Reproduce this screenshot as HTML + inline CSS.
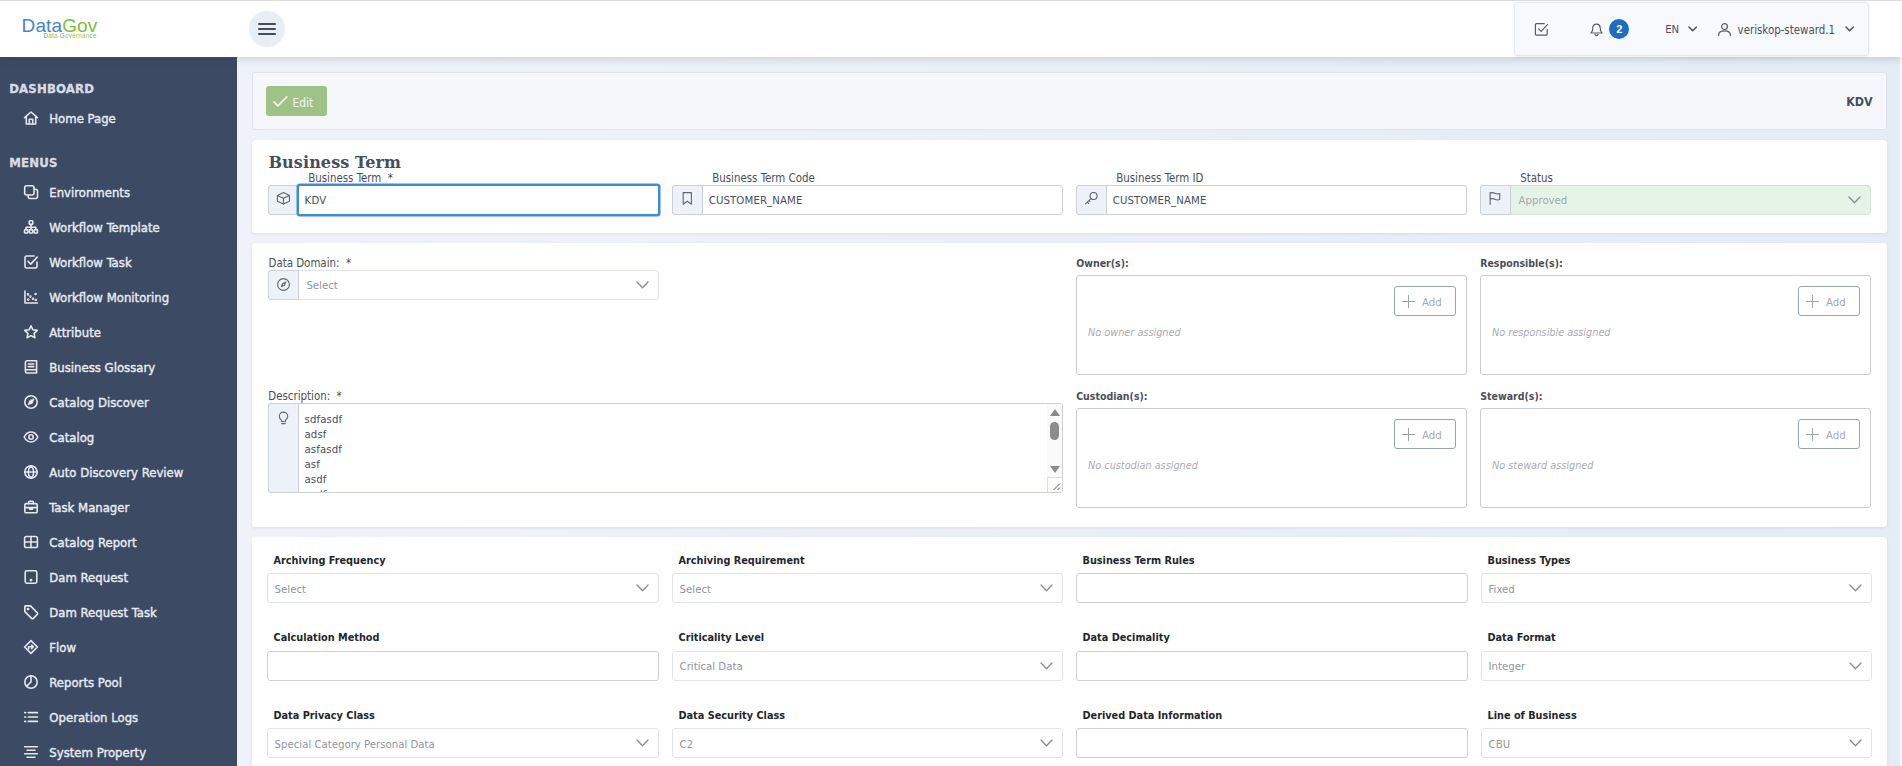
<!DOCTYPE html>
<html lang="en">
<head>
<meta charset="utf-8">
<title>DataGov - Business Term</title>
<style>
*{box-sizing:border-box;margin:0;padding:0}
html,body{width:1902px;height:766px;overflow:hidden}
body{position:relative;background:linear-gradient(90deg,#eff2f9 237px,#e5ecf6 1902px);font-family:"DejaVu Sans Condensed","Liberation Sans",sans-serif;font-size:11.3px;color:#4a5058}
.abs{position:absolute}
/* ---------- top bar ---------- */
#top{position:absolute;left:0;top:0;width:1902px;height:57px;background:#fff;border-top:1px solid #dcdcdc;box-shadow:0 1px 9px rgba(50,58,70,.22);z-index:5}
#logo1{position:absolute;left:21.600px;top:13.900px;letter-spacing:.12px;font:400 19px/22px "Liberation Sans",sans-serif;white-space:nowrap}
#logo1 .b{color:#4b83c6}#logo1 .g{color:#80bb3e}
#logo2{position:absolute;left:43.500px;top:31.200px;font:400 6.3px/8px "Liberation Sans",sans-serif;white-space:nowrap;letter-spacing:.25px;color:#8fc35a}
#logo2 .b{color:#6f8fc0}
#burger{position:absolute;left:249px;top:10px;width:36px;height:36px;border-radius:50%;background:#e8eef6}
#burger i{position:absolute;left:9px;width:18px;height:2px;background:#464d55;border-radius:1px}
#hbox{position:absolute;left:1514px;top:1px;width:355px;height:54px;background:#f8f9fc;border:1px solid #e4e8ee;border-radius:4px;box-shadow:0 1px 3px rgba(60,75,100,.10)}
#hbox .t{position:absolute;top:18.600px;font-size:11.3px;line-height:16px;color:#4a5058;white-space:nowrap}
#badge{position:absolute;left:94.400px;top:16px;width:20px;height:20px;border-radius:50%;background:#1b6ec2;color:#fff;font:700 11px/20px "Liberation Sans",sans-serif;text-align:center}
/* ---------- sidebar ---------- */
#side{position:absolute;left:0;top:57px;width:237px;height:709px;background:#3c4a64;z-index:4}
#side .h{position:absolute;left:9.2px;font:700 13px/16px "DejaVu Sans Condensed","Liberation Sans",sans-serif;color:#d6dce6;letter-spacing:.2px;white-space:nowrap;-webkit-text-stroke:.35px #d6dce6}
#side .it{position:absolute;left:49.3px;font:400 13px/16px "DejaVu Sans Condensed","Liberation Sans",sans-serif;color:#e6eaf1;white-space:nowrap;-webkit-text-stroke:.4px #e6eaf1}
#side svg{position:absolute;left:23px;width:16px;height:16px;fill:none;stroke:#e3e8f0;stroke-width:1.6;stroke-linecap:round;stroke-linejoin:round}
/* ---------- main ---------- */
.card{position:absolute;left:252px;width:1635px;background:#fff;border-radius:3.500px;box-shadow:0 1px 3px rgba(60,75,100,.10)}
#tb{left:252px;top:72px;width:1635px;height:57.5px;background:#f5f7fb;border:1px solid #dfe4eb;border-radius:3px;box-shadow:none}
#edit{position:absolute;left:13px;top:13px;width:61px;height:30px;border-radius:3px;background:#9fc387;color:#f2f8ee;font-size:11.3px;line-height:30px}
#edit span{position:absolute;left:26.500px;top:2px;font-size:11.8px}
#kdv{position:absolute;right:13.300px;top:21.400px;font:700 12.4px/16px "DejaVu Sans Condensed","Liberation Sans",sans-serif;color:#464f5c}
h2{position:absolute;left:16.5px;top:13px;font:700 16px/20px "DejaVu Serif","Liberation Serif",serif;color:#434e5e;letter-spacing:.1px;white-space:nowrap}
.lbl{position:absolute;font-size:11.4px;line-height:14px;color:#4a5058;white-space:nowrap}
.bl{position:absolute;font:700 10.8px/14px "DejaVu Sans Condensed","Liberation Sans",sans-serif;color:#23272c;white-space:nowrap}
.bl2{position:absolute;font:700 10.5px/14px "DejaVu Sans Condensed","Liberation Sans",sans-serif;color:#4a4f56;white-space:nowrap}
.box{position:absolute;height:30px;border:1px solid #cdd0d4;border-radius:3px;background:#fff}
.box.sel{border-color:#e0e4e9}
.box .ad{position:absolute;left:-1px;top:-1px;width:31px;height:30px;border:1px solid #cdd0d4;border-radius:3px 0 0 3px;background:#edf2f9}
.box.sel .ad{border-color:#cdd0d4}
.box .v{position:absolute;top:7.500px;font-size:11.3px;line-height:14px;color:#4a5058;white-space:nowrap;letter-spacing:.12px}
.box .ph{position:absolute;top:7.500px;font-size:11.3px;line-height:14px;color:#8f969c;white-space:nowrap}
.chev{position:absolute;right:9.5px;top:10px;width:13px;height:8px;fill:none;stroke:#868e96;stroke-width:1.3;stroke-linecap:round;stroke-linejoin:round}
.ic{position:absolute;fill:none;stroke:#5f666e;stroke-width:1.1;stroke-linecap:round;stroke-linejoin:round}
.box .focus{position:absolute;left:29px;top:-1px;right:-1px;bottom:-1px;border:1px solid #3d8bd9;border-radius:2px;box-shadow:0 0 0 1.500px #3d8bd9;background:#fff}
.box.st{background:#e4f3e6;border-color:#d3ddd6 #dbe6dd #dbe6dd}
.box.ta .clip{position:absolute;left:0;top:0;right:0;bottom:0;overflow:hidden}
.sbar{position:absolute;right:0;top:0;width:15px;bottom:0;background:#fafafa}
.sbar .up{position:absolute;left:2.500px;top:5px;border:5px solid transparent;border-top:0;border-bottom:7px solid #8c8c8c}
.sbar .dn{position:absolute;left:2.500px;top:62px;border:5px solid transparent;border-bottom:0;border-top:7px solid #8c8c8c}
.sbar .th{position:absolute;left:3px;top:17.500px;width:9px;height:18px;border-radius:4.500px;background:#8c8c8c}
.sbar .rz{position:absolute;left:0;bottom:0;width:15px;height:15px;background:#fff;border-left:1px solid #dcdcdc;border-top:1px solid #dcdcdc}
.sbar .rz svg{position:absolute;left:-1px;top:-1px;width:15px;height:15px;fill:none;stroke:#555;stroke-width:1}
.pbox{position:absolute;width:391px;height:100px;border:1px solid #c9cdd2;border-radius:3px;background:#fff}
.pbox .add{position:absolute;right:10px;top:10px;width:62px;height:30px;border:1px solid #9aa4ae;border-radius:3px;color:#a2aab2;font-size:11.3px;line-height:28px}
.pbox .add span{position:absolute;left:27px;top:1.700px}
.pbox .add svg{position:absolute;left:7px;top:8px;width:13px;height:13px;fill:none;stroke:#9aa3ab;stroke-width:1;stroke-linecap:round}
.pbox em{position:absolute;left:11px;top:50.300px;font:italic 400 10.8px/14px "DejaVu Sans Condensed","Liberation Sans",sans-serif;color:#a9adb1;white-space:nowrap}
</style>
</head>
<body>
<!-- TOP -->
<div id="top">
  <div id="logo1"><span class="b">Data</span><span class="g">Gov</span></div>
  <div id="logo2"><span class="b">D</span>ata <span class="b">G</span>overnance</div>
  <div id="burger"><i style="top:12px"></i><i style="top:17.2px"></i><i style="top:22.4px"></i></div>
  <div id="hbox">
    <svg class="ic" style="left:18.600px;top:19px;width:15px;height:15px;stroke:#555d66;stroke-width:1.2" viewBox="0 0 15 15"><path d="M13.2 7.4v4.6a1.2 1.2 0 0 1-1.2 1.2H2.6a1.2 1.2 0 0 1-1.2-1.2V2.8a1.2 1.2 0 0 1 1.2-1.2h7.6"/><path d="M4.6 6.8l2.5 2.5 6.4-6.6"/></svg>
    <svg class="ic" style="left:74px;top:18.800px;width:15px;height:15px;stroke:#555d66;stroke-width:1.2" viewBox="0 0 15 15"><path d="M2 11h11c-1.2-1-1.7-2.300-1.700-4.600 0-2.400-1.600-4.200-3.800-4.200S3.700 4 3.700 6.400C3.700 8.700 3.200 10 2 11z"/><path d="M6 12.600c.3.700.8 1 1.500 1s1.200-.3 1.500-1"/></svg>
    <div id="badge">2</div>
    <div class="t" style="left:150.200px">EN</div>
    <svg class="chev" style="left:172.600px;top:23.400px;right:auto;width:10px;height:7px;stroke:#4a5058;stroke-width:1.5" viewBox="0 0 10 7"><path d="M1 1l3.700 3.700L8.400 1"/></svg>
    <svg class="ic" style="left:202.400px;top:18.800px;width:15px;height:15px;stroke:#555d66;stroke-width:1.2" viewBox="0 0 15 15"><circle cx="7.5" cy="4.600" r="2.900"/><path d="M1.500 13.600c0-3 2.600-4.800 6-4.800s6 1.800 6 4.800"/></svg>
    <div class="t" style="left:222.600px;font-size:11.4px">veriskop-steward.1</div>
    <svg class="chev" style="left:329.600px;top:23.400px;right:auto;width:10px;height:7px;stroke:#4a5058;stroke-width:1.5" viewBox="0 0 10 7"><path d="M1 1l3.700 3.700L8.400 1"/></svg>
  </div>
</div>

<div style="position:absolute;left:1900px;top:57px;width:2px;height:709px;background:linear-gradient(90deg,rgba(255,255,255,.55) 50%,#fff 50%);z-index:3"></div>
<!-- SIDEBAR -->
<div id="side">
  <div class="h" style="top:24px">DASHBOARD</div>
  <div class="h" style="top:98px">MENUS</div>
  <!--SIDEITEMS-->
  <svg viewBox="0 0 16 16" style="top:53.0px"><path d="M1.6 7.6L8 2l6.400 5.600"/><path d="M3.300 6.400V14h9.400V6.400"/><path d="M6.300 14V9.300h3.400V14"/></svg><div class="it" style="top:53.5px">Home Page</div>
  <svg viewBox="0 0 16 16" style="top:127.0px"><rect x="1.700" y="1.700" width="9.300" height="9.300" rx="2"/><path d="M5.200 11.200v1.300a2 2 0 0 0 2 2h5.300a2 2 0 0 0 2-2V7.200a2 2 0 0 0-2-2h-1.300"/></svg><div class="it" style="top:127.5px">Environments</div>
  <svg viewBox="0 0 16 16" style="top:162.0px"><rect x="6.200" y="1.800" width="3.600" height="3.600" rx=".8"/><rect x="1.500" y="10.600" width="3.400" height="3.400" rx=".8"/><rect x="6.300" y="10.600" width="3.400" height="3.400" rx=".8"/><rect x="11.100" y="10.600" width="3.400" height="3.400" rx=".8"/><path d="M8 5.400v5.200M3.200 10.600V8.200h9.600v2.400"/></svg><div class="it" style="top:162.5px">Workflow Template</div>
  <svg viewBox="0 0 16 16" style="top:197.0px"><path d="M14 8v4.400a1.600 1.600 0 0 1-1.600 1.600H3.600A1.600 1.600 0 0 1 2 12.400V3.600A1.600 1.600 0 0 1 3.600 2h7.600"/><path d="M5 7.400l2.700 2.700 6.500-7"/></svg><div class="it" style="top:197.5px">Workflow Task</div>
  <svg viewBox="0 0 16 16" style="top:232.0px"><path d="M2 2v12h12.400"/><circle cx="5.200" cy="10.600" r=".5"/><circle cx="7.400" cy="7.600" r=".5"/><circle cx="10" cy="9.800" r=".5"/><circle cx="12.600" cy="5" r=".5"/><circle cx="5" cy="5.400" r=".5"/><circle cx="12.800" cy="11" r=".5"/></svg><div class="it" style="top:232.5px">Workflow Monitoring</div>
  <svg viewBox="0 0 16 16" style="top:267.0px"><path d="M8 1.800l1.900 4 4.400.6-3.200 3 .8 4.300L8 11.600l-3.900 2.100.8-4.300-3.200-3 4.400-.6z"/></svg><div class="it" style="top:267.5px">Attribute</div>
  <svg viewBox="0 0 16 16" style="top:302.0px"><path d="M2.400 12.400V3.400A1.600 1.600 0 0 1 4 1.800h9.600v9H4a1.600 1.600 0 0 0-1.600 1.600A1.600 1.600 0 0 0 4 14h9.600v-3.200"/><path d="M5.400 5h5.400M5.400 7.600h5.400"/></svg><div class="it" style="top:302.5px">Business Glossary</div>
  <svg viewBox="0 0 16 16" style="top:337.0px"><circle cx="8" cy="8" r="6.200"/><path d="M10.800 5.200L9.300 9.300 5.200 10.800l1.500-4.100z" fill="#eef0f4" stroke-width=".8"/></svg><div class="it" style="top:337.5px">Catalog Discover</div>
  <svg viewBox="0 0 16 16" style="top:372.0px"><path d="M1.200 8S3.700 3 8 3s6.800 5 6.800 5S12.300 13 8 13 1.200 8 1.200 8z"/><circle cx="8" cy="8" r="2.200"/></svg><div class="it" style="top:372.5px">Catalog</div>
  <svg viewBox="0 0 16 16" style="top:407.0px"><circle cx="8" cy="8" r="6.200"/><path d="M1.800 8h12.400M8 1.800c-2 1.800-2.800 3.900-2.800 6.200s.8 4.400 2.800 6.200c2-1.800 2.800-3.900 2.800-6.200S10 3.600 8 1.800z"/></svg><div class="it" style="top:407.5px">Auto Discovery Review</div>
  <svg viewBox="0 0 16 16" style="top:442.0px"><rect x="1.800" y="4.600" width="12.400" height="9.200" rx="1.400"/><path d="M5.600 4.600V3.200a1 1 0 0 1 1-1h2.800a1 1 0 0 1 1 1v1.400M1.800 8.600h12.400M6.600 8.600v1.600h2.800V8.600"/></svg><div class="it" style="top:442.5px">Task Manager</div>
  <svg viewBox="0 0 16 16" style="top:477.0px"><rect x="1.600" y="2.500" width="12.800" height="11" rx="1.800"/><path d="M8 2.500v11M1.600 8h12.800"/></svg><div class="it" style="top:477.5px">Catalog Report</div>
  <svg viewBox="0 0 16 16" style="top:512.0px"><rect x="2.200" y="1.800" width="11.600" height="12.400" rx="1.600"/><circle cx="8" cy="11.200" r=".6"/></svg><div class="it" style="top:512.5px">Dam Request</div>
  <svg viewBox="0 0 16 16" style="top:547.0px"><path d="M1.800 2.600v5l6.800 6.800a1.200 1.200 0 0 0 1.700 0l4-4a1.200 1.200 0 0 0 0-1.700L7.500 1.900H2.500a.7.700 0 0 0-.7.700z"/><circle cx="5" cy="5.100" r=".6"/></svg><div class="it" style="top:547.5px">Dam Request Task</div>
  <svg viewBox="0 0 16 16" style="top:582.0px"><path d="M8 1.600L14.400 8 8 14.400 1.600 8z"/><path d="M5.600 10V7.800h4.600M8.600 6l1.800 1.800-1.800 1.800"/></svg><div class="it" style="top:582.5px">Flow</div>
  <svg viewBox="0 0 16 16" style="top:617.0px"><circle cx="8" cy="8" r="6.200"/><path d="M8 1.800V8l-4.400 4.300"/></svg><div class="it" style="top:617.5px">Reports Pool</div>
  <svg viewBox="0 0 16 16" style="top:652.0px"><path d="M5.400 3.600h9M5.400 8h9M5.400 12.400h9" stroke-width="1.700"/><path d="M1.800 3.600h.8M1.800 8h.8M1.800 12.400h.8" stroke-width="1.700"/></svg><div class="it" style="top:652.5px">Operation Logs</div>
  <svg viewBox="0 0 16 16" style="top:687.0px"><path d="M1.600 2.800h12.800M4 6.300h8M1.600 9.800h12.800M4 13.300h8" stroke-width="1.500"/></svg><div class="it" style="top:687.5px">System Property</div>
  <!--/SIDEITEMS-->
</div>

<!-- MAIN -->
<div class="card" id="tb">
  <div id="edit"><svg style="position:absolute;left:7px;top:9.500px;width:15px;height:11px;fill:none;stroke:#f2f8ee;stroke-width:1.7;stroke-linecap:round;stroke-linejoin:round" viewBox="0 0 15 11"><path d="M1 5.800l3.800 4L13.800 1"/></svg><span>Edit</span></div>
  <div id="kdv">KDV</div>
</div>

<div class="card" id="c2" style="top:140px;height:93px">
  <h2>Business Term</h2>
  <!--C2-->
  <div class="lbl" style="left:56.2px;top:30.7px">Business Term&nbsp; *</div>
  <div class="box" style="left:16.0px;top:45px;width:391px"><div class="ad"><svg class="ic" style="left:7px;top:6px;width:16px;height:15px" viewBox="0 0 16 15"><path d="M7.450 .5l6 2.900v5.800l-6 2.850-6-2.850V3.400z"/><path d="M1.450 3.400l6 2.900 6-2.900M7.450 6.300v5.750"/></svg></div><div class="focus"></div><div class="v" style="left:35.6px">KDV</div></div>
  <div class="lbl" style="left:460.2px;top:30.7px">Business Term Code</div>
  <div class="box" style="left:420.0px;top:45px;width:391px"><div class="ad"><svg class="ic" style="left:8px;top:6px;width:15px;height:15px" viewBox="0 0 15 15"><path d="M2.200 .6h8.200v11.600l-4.100-3-4.100 3z"/></svg></div><div class="v" style="left:35.7px">CUSTOMER_NAME</div></div>
  <div class="lbl" style="left:864.2px;top:30.7px">Business Term ID</div>
  <div class="box" style="left:824.0px;top:45px;width:391px"><div class="ad"><svg class="ic" style="left:7px;top:6px;width:16px;height:15px" viewBox="0 0 16 15"><circle cx="9.600" cy="4" r="3.500"/><path d="M7 6.600L1.500 11.900M3.400 10l1.200 1.300M5 8.500l.9 1"/></svg></div><div class="v" style="left:35.7px">CUSTOMER_NAME</div></div>
  <div class="lbl" style="left:1268.2px;top:30.7px">Status</div>
  <div class="box sel st" style="left:1228.0px;top:45px;width:391px"><div class="ad"><svg class="ic" style="left:7px;top:6px;width:16px;height:15px" viewBox="0 0 16 15"><path d="M2.100 12.400V.6M2.100 1.100c1.600-.8 3.200-.6 4.800.2s3 .9 4.800.2v6c-1.800.7-3.200.6-4.800-.2s-3.200-1-4.800-.2"/></svg></div><div class="ph" style="left:37.6px;color:#a3aaae">Approved</div><svg class="chev" viewBox="0 0 13 8"><path d="M1 1l5.500 5.700L12 1"/></svg></div>
  <!--/C2-->
</div>

<div class="card" id="c3" style="top:243px;height:284px">
  <!--C3-->
  <div class="lbl" style="left:16.5px;top:13.4px">Data Domain:&nbsp; *</div>
  <div class="box sel" style="left:16.0px;top:27px;width:391px"><div class="ad"><svg class="ic" style="left:7px;top:5.800px;width:15px;height:15px" viewBox="0 0 15 15"><circle cx="7.500" cy="7.500" r="5.900"/><path d="M10 5L8.600 8.600 5 10l1.400-3.600z" fill="#5a6470" stroke-width=".6"/><circle cx="7.500" cy="7.500" r=".7" fill="#edf2f9" stroke="none"/></svg></div><div class="ph" style="left:37.4px;top:8.300px">Select</div><svg class="chev" viewBox="0 0 13 8"><path d="M1 1l5.500 5.700L12 1"/></svg></div>
  <div class="lbl" style="left:16.3px;top:146.0px">Description:&nbsp; *</div>
  <div class="box ta" style="left:16.0px;top:160px;width:795px;height:90px"><div class="ad" style="height:90px"><svg class="ic" style="left:6.700px;top:5.500px;width:15px;height:15px" viewBox="0 0 15 15"><path d="M5.600 10.200C4.200 9.300 3.300 7.900 3.300 6.300a4.200 4.200 0 0 1 8.400 0c0 1.600-.9 3-2.300 3.900v1.300H5.600z"/><path d="M5.700 13.600h3.600"/></svg></div><div class="clip"><div class="v" style="left:35.500px;top:8.8px">sdfasdf</div><div class="v" style="left:35.500px;top:23.8px">adsf</div><div class="v" style="left:35.500px;top:38.8px">asfasdf</div><div class="v" style="left:35.500px;top:53.8px">asf</div><div class="v" style="left:35.500px;top:68.8px">asdf</div><div class="v" style="left:35.500px;top:83.8px">asdf</div></div><div class="sbar"><i class="up"></i><i class="th"></i><i class="dn"></i><div class="rz"><svg viewBox="0 0 15 15"><path d="M13 6.500L6.500 13M13 10.500L10.500 13"/></svg></div></div></div>
  <div class="bl2" style="left:824.2px;top:12.9px">Owner(s):</div><div class="pbox" style="left:824.0px;top:32.0px"><div class="add"><svg viewBox="0 0 13 13"><path d="M6.500 .5v12M.5 6.500h12"/></svg><span>Add</span></div><em>No owner assigned</em></div>
  <div class="bl2" style="left:1228.2px;top:12.9px">Responsible(s):</div><div class="pbox" style="left:1228.0px;top:32.0px"><div class="add"><svg viewBox="0 0 13 13"><path d="M6.500 .5v12M.5 6.500h12"/></svg><span>Add</span></div><em>No responsible assigned</em></div>
  <div class="bl2" style="left:824.2px;top:145.9px">Custodian(s):</div><div class="pbox" style="left:824.0px;top:165.0px"><div class="add"><svg viewBox="0 0 13 13"><path d="M6.500 .5v12M.5 6.500h12"/></svg><span>Add</span></div><em>No custodian assigned</em></div>
  <div class="bl2" style="left:1228.2px;top:145.9px">Steward(s):</div><div class="pbox" style="left:1228.0px;top:165.0px"><div class="add"><svg viewBox="0 0 13 13"><path d="M6.500 .5v12M.5 6.500h12"/></svg><span>Add</span></div><em>No steward assigned</em></div>
  <!--/C3-->
</div>

<div class="card" id="c4" style="top:537px;height:240px">
  <!--C4-->
  <div class="bl" style="left:21.5px;top:17.3px">Archiving Frequency</div>
  <div class="box sel" style="left:15.0px;top:36px;width:392px;height:29.5px"><div class="ph" style="left:6.600px;top:8.5px">Select</div><svg class="chev" viewBox="0 0 13 8"><path d="M1 1l5.500 5.700L12 1"/></svg></div>
  <div class="bl" style="left:426.5px;top:17.3px">Archiving Requirement</div>
  <div class="box sel" style="left:420.0px;top:36px;width:391px;height:29.5px"><div class="ph" style="left:6.600px;top:8.5px">Select</div><svg class="chev" viewBox="0 0 13 8"><path d="M1 1l5.500 5.700L12 1"/></svg></div>
  <div class="bl" style="left:830.5px;top:17.3px">Business Term Rules</div>
  <div class="box" style="left:824.0px;top:36px;width:392px;height:29.5px"></div>
  <div class="bl" style="left:1235.5px;top:17.3px">Business Types</div>
  <div class="box sel" style="left:1229.0px;top:36px;width:391px;height:29.5px"><div class="ph" style="left:6.600px;top:8.5px">Fixed</div><svg class="chev" viewBox="0 0 13 8"><path d="M1 1l5.500 5.700L12 1"/></svg></div>
  <div class="bl" style="left:21.5px;top:94.1px">Calculation Method</div>
  <div class="box" style="left:15.0px;top:114px;width:392px;height:30px"></div>
  <div class="bl" style="left:426.5px;top:94.1px">Criticality Level</div>
  <div class="box sel" style="left:420.0px;top:114px;width:391px;height:30px"><div class="ph" style="left:6.600px;top:7.5px">Critical Data</div><svg class="chev" viewBox="0 0 13 8"><path d="M1 1l5.500 5.700L12 1"/></svg></div>
  <div class="bl" style="left:830.5px;top:94.1px">Data Decimality</div>
  <div class="box" style="left:824.0px;top:114px;width:392px;height:30px"></div>
  <div class="bl" style="left:1235.5px;top:94.1px">Data Format</div>
  <div class="box sel" style="left:1229.0px;top:114px;width:391px;height:30px"><div class="ph" style="left:6.600px;top:7.5px">Integer</div><svg class="chev" viewBox="0 0 13 8"><path d="M1 1l5.500 5.700L12 1"/></svg></div>
  <div class="bl" style="left:21.5px;top:172.1px">Data Privacy Class</div>
  <div class="box sel" style="left:15.0px;top:191px;width:392px;height:30px"><div class="ph" style="left:6.600px;top:8.5px">Special Category Personal Data</div><svg class="chev" viewBox="0 0 13 8"><path d="M1 1l5.500 5.700L12 1"/></svg></div>
  <div class="bl" style="left:426.5px;top:172.1px">Data Security Class</div>
  <div class="box sel" style="left:420.0px;top:191px;width:391px;height:30px"><div class="ph" style="left:6.600px;top:8.5px">C2</div><svg class="chev" viewBox="0 0 13 8"><path d="M1 1l5.500 5.700L12 1"/></svg></div>
  <div class="bl" style="left:830.5px;top:172.1px">Derived Data Information</div>
  <div class="box" style="left:824.0px;top:191px;width:392px;height:30px"></div>
  <div class="bl" style="left:1235.5px;top:172.1px">Line of Business</div>
  <div class="box sel" style="left:1229.0px;top:191px;width:391px;height:30px"><div class="ph" style="left:6.600px;top:8.5px">CBU</div><svg class="chev" viewBox="0 0 13 8"><path d="M1 1l5.500 5.700L12 1"/></svg></div>
  <!--/C4-->
</div>
</body>
</html>
